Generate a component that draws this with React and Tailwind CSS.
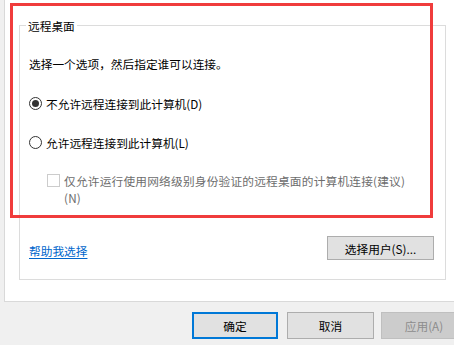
import React from "react";

function Radio({ checked }) {
  return (
    <span className="flex h-[13px] w-[13px] shrink-0 items-center justify-center rounded-full border border-[#333333] bg-white">
      {checked && <span className="h-[7px] w-[7px] rounded-full bg-[#333333]" />}
    </span>
  );
}

export default function App() {
  return (
    <div
      className="relative h-[345px] w-[454px] overflow-hidden bg-[#f0f0f0] text-[11.7px] leading-[17px] text-black"
      style={{ fontFamily: '"Noto Sans CJK SC", "Microsoft YaHei", sans-serif' }}
    >
      <div className="ml-[4px] h-[302px] w-[460px] border-b border-l border-[#d9d9d9] bg-white pt-[25px]">
        <div className="ml-[14px] flex h-[255px] w-[427px] flex-col border border-[#dcdcdc]">
          <div className="-mt-[9px] ml-[6px] w-fit bg-white px-[2px]">远程桌面</div>
          <div className="mt-[21px] pl-[9px]">选择一个选项，然后指定谁可以连接。</div>
          <div className="mt-[23px] flex items-center gap-[4px] pl-[9px]">
            <Radio checked />
            <span>不允许远程连接到此计算机(D)</span>
          </div>
          <div className="mt-[22px] flex items-center gap-[4px] pl-[9px]">
            <Radio />
            <span>允许远程连接到此计算机(L)</span>
          </div>
          <div className="mt-[21px] flex items-start gap-[4px] pl-[27px] text-[#6d6d6d]">
            <span className="mt-[2px] h-[13px] w-[13px] shrink-0 border border-[#cccccc] bg-white" />
            <span className="tracking-[0.2px]">
              仅允许运行使用网络级别身份验证的远程桌面的计算机连接(建议)
              <br />
              (N)
            </span>
          </div>
          <div className="mt-[30px] flex items-start justify-between pl-[9px] pr-[11px]">
            <span className="mt-[6px] text-[#0066cc] underline underline-offset-2">帮助我选择</span>
            <div className="flex h-[24px] w-[107px] items-center justify-center border border-[#adadad] bg-[#e1e1e1]">
              选择用户(S)...
            </div>
          </div>
        </div>
      </div>
      <div className="ml-[192px] mt-[10px] flex w-[300px]">
        <div className="flex h-[27px] w-[86px] shrink-0 items-center justify-center border-2 border-[#0078d7] bg-[#e1e1e1]">
          确定
        </div>
        <div className="ml-[9px] flex h-[27px] w-[87px] shrink-0 items-center justify-center border border-[#adadad] bg-[#e1e1e1]">
          取消
        </div>
        <div className="ml-[7px] flex h-[27px] w-[86px] shrink-0 items-center justify-center border border-[#bfbfbf] bg-[#cccccc] text-[#8c8c8c]">
          应用(A)
        </div>
      </div>
      <div className="pointer-events-none absolute left-[10px] top-[3px] h-[215px] w-[423px] border-[3px] border-[#f03c3c]" />
    </div>
  );
}
